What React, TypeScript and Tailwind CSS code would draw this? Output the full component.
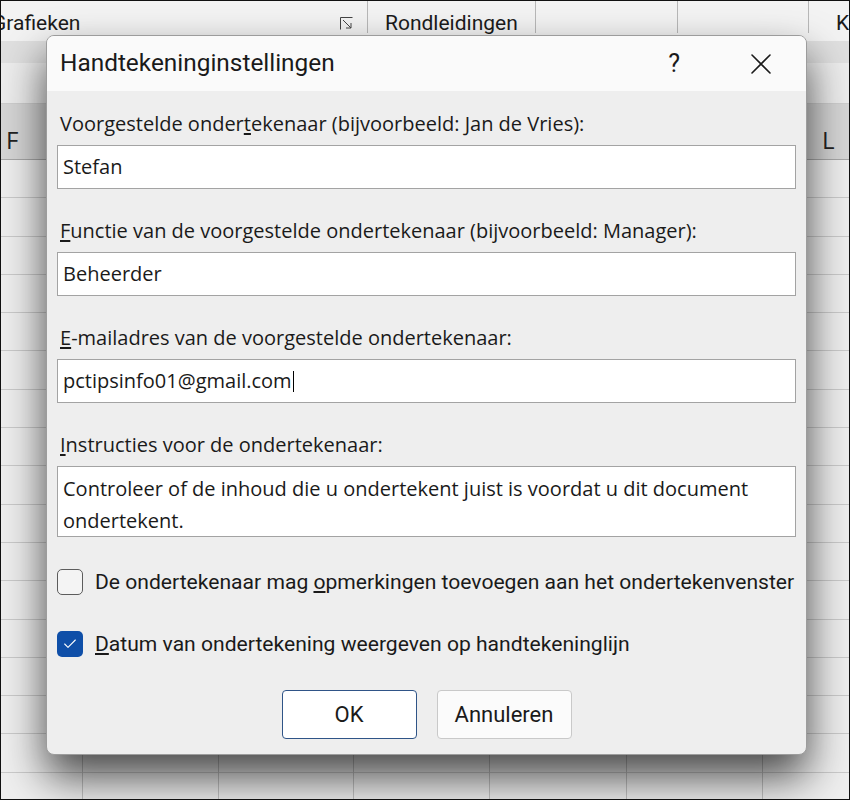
import { Check } from "lucide-react";

const COLS = [81, 217, 352, 488, 625, 761];
const ROWS = Array.from({ length: 17 });

function Sheet() {
  return (
    <div className="absolute inset-0 flex flex-col overflow-hidden bg-[#efefef]">
      {/* ribbon group labels */}
      <div className="relative h-[40px] shrink-0 bg-[#f3f3f3] font-['Roboto',sans-serif] text-[21px] text-[#1b1b1b]">
        <span className="absolute left-[-9px] top-[7px]">Grafieken</span>
        <svg className="absolute left-[338px] top-[15px]" width="15" height="15" viewBox="0 0 15 15" fill="none" stroke="#444" strokeWidth="1">
          <path d="M1.5 13.5V1.5H13.5" />
          <path d="M4 4L12 12M12 7V12H7" />
        </svg>
        <span className="absolute left-[384px] top-[7px]">Rondleidingen</span>
        <span className="absolute left-[835px] top-[7px]">Ko</span>
        <div className="absolute left-[366px] top-0 h-[32px] w-px bg-[#b8b8b8]" />
        <div className="absolute left-[534px] top-0 h-[32px] w-px bg-[#b8b8b8]" />
        <div className="absolute left-[676px] top-0 h-[32px] w-px bg-[#b8b8b8]" />
        <div className="absolute left-[807px] top-0 h-[32px] w-px bg-[#b8b8b8]" />
      </div>
      <div className="h-[22px] shrink-0 bg-[#e0e0e0]" />
      <div className="h-[41px] shrink-0 border-b border-[#cfcfcf] bg-[#ededed]" />
      {/* column headers */}
      <div className="relative h-[56px] shrink-0 border-b border-[#a8a8a8] bg-[#d6d6d6] font-['Open_Sans',sans-serif] text-[24px] text-[#222]">
        <span className="absolute left-[5px] top-[22px] leading-[28px]">F</span>
        <span className="absolute left-[821px] top-[22px] leading-[28px]">L</span>
      </div>
      <div className="flex flex-col">
        {ROWS.map((_, i) => (
          <div key={i} className="h-[38.3px] shrink-0 border-b border-[#cbcbcb]" />
        ))}
      </div>
      {COLS.map((x) => (
        <div key={x} className="absolute top-[104px] bottom-0 w-px bg-[#c2c2c2]" style={{ left: x }} />
      ))}
    </div>
  );
}

function Field({ label, value, tall, caret }: { label: React.ReactNode; value: React.ReactNode; tall?: boolean; caret?: boolean }) {
  return (
    <div className="flex flex-col">
      <div className="h-[28px] pl-[3px] text-[20px] leading-[28px]">{label}</div>
      <div
        className={`mt-[7px] border border-[#a3a3a3] bg-white px-[5px] text-[20px] ${
          tall ? "h-[71px] pt-[6px] leading-[32px]" : "flex h-[44px] items-center"
        }`}
      >
        <span>{value}</span>
        {caret && <span className="ml-[1px] inline-block h-[21px] w-px bg-black" />}
      </div>
    </div>
  );
}

function CheckRow({ checked, children }: { checked?: boolean; children: React.ReactNode }) {
  return (
    <div className="flex items-center gap-[12px]">
      <div
        className={`flex h-[26px] w-[26px] shrink-0 items-center justify-center rounded-[5px] ${
          checked ? "bg-[#0f4fa8]" : "border-[1.5px] border-[#5c5c5c] bg-[#f4f4f4]"
        }`}
      >
        {checked && <Check className="h-[16px] w-[16px] text-white" strokeWidth={1.6} />}
      </div>
      <span className="whitespace-nowrap font-['Roboto',sans-serif] text-[21.1px] leading-[28px] text-[#1a1a1a]">
        {children}
      </span>
    </div>
  );
}

export default function App() {
  return (
    <div className="relative h-[800px] w-[850px] overflow-hidden border border-[#111] bg-white">
      <Sheet />
      <div className="absolute left-[45px] top-[34px] flex h-[720px] w-[761px] flex-col overflow-hidden rounded-[8px] border border-[#9c9c9c] bg-[#eeeeee] font-['Open_Sans',sans-serif] text-[#1a1a1a] shadow-[0_22px_44px_rgba(0,0,0,0.7)]">
        <div className="flex h-[55px] shrink-0 items-center bg-[#fafafa] pl-[13px] pr-[35px]">
          <span className="flex-1 font-['Roboto',sans-serif] text-[24.4px]">Handtekeninginstellingen</span>
          <span className="mr-[71px] font-['Roboto',sans-serif] text-[25px]">?</span>
          <svg width="20" height="20" viewBox="0 0 20 20" stroke="#1a1a1a" strokeWidth="1.6" strokeLinecap="round">
            <path d="M1 1L19 19M19 1L1 19" />
          </svg>
        </div>
        <div className="flex flex-1 flex-col px-[10px] pt-[19px]">
          <div className="flex flex-col gap-[28px]">
            <Field
              label={
                <>
                  Voorgestelde onder<u className="underline-offset-2">t</u>ekenaar (bijvoorbeeld: Jan de Vries):
                </>
              }
              value="Stefan"
            />
            <Field
              label={
                <>
                  <u className="underline-offset-2">F</u>unctie van de voorgestelde ondertekenaar (bijvoorbeeld: Manager):
                </>
              }
              value="Beheerder"
            />
            <Field
              label={
                <>
                  <u className="underline-offset-2">E</u>-mailadres van de voorgestelde ondertekenaar:
                </>
              }
              value="pctipsinfo01@gmail.com"
              caret
            />
            <Field
              label={
                <>
                  <u className="underline-offset-2">I</u>nstructies voor de ondertekenaar:
                </>
              }
              value="Controleer of de inhoud die u ondertekent juist is voordat u dit document ondertekent."
              tall
            />
          </div>
          <div className="mt-[31px] flex flex-col gap-[34px]">
            <CheckRow>
              De ondertekenaar mag <u className="underline-offset-2">o</u>pmerkingen toevoegen aan het ondertekenvenster
            </CheckRow>
            <CheckRow checked>
              <u className="underline-offset-2">D</u>atum van ondertekening weergeven op handtekeninglijn
            </CheckRow>
          </div>
          <div className="mt-[32px] flex justify-center gap-[20px] font-['Roboto',sans-serif] text-[22px]">
            <button className="h-[49px] w-[135px] rounded-[4px] border border-[#2f5487] bg-white">OK</button>
            <button className="h-[49px] w-[135px] rounded-[4px] border border-[#c9c9c9] bg-[#fbfbfb]">Annuleren</button>
          </div>
        </div>
      </div>
    </div>
  );
}
